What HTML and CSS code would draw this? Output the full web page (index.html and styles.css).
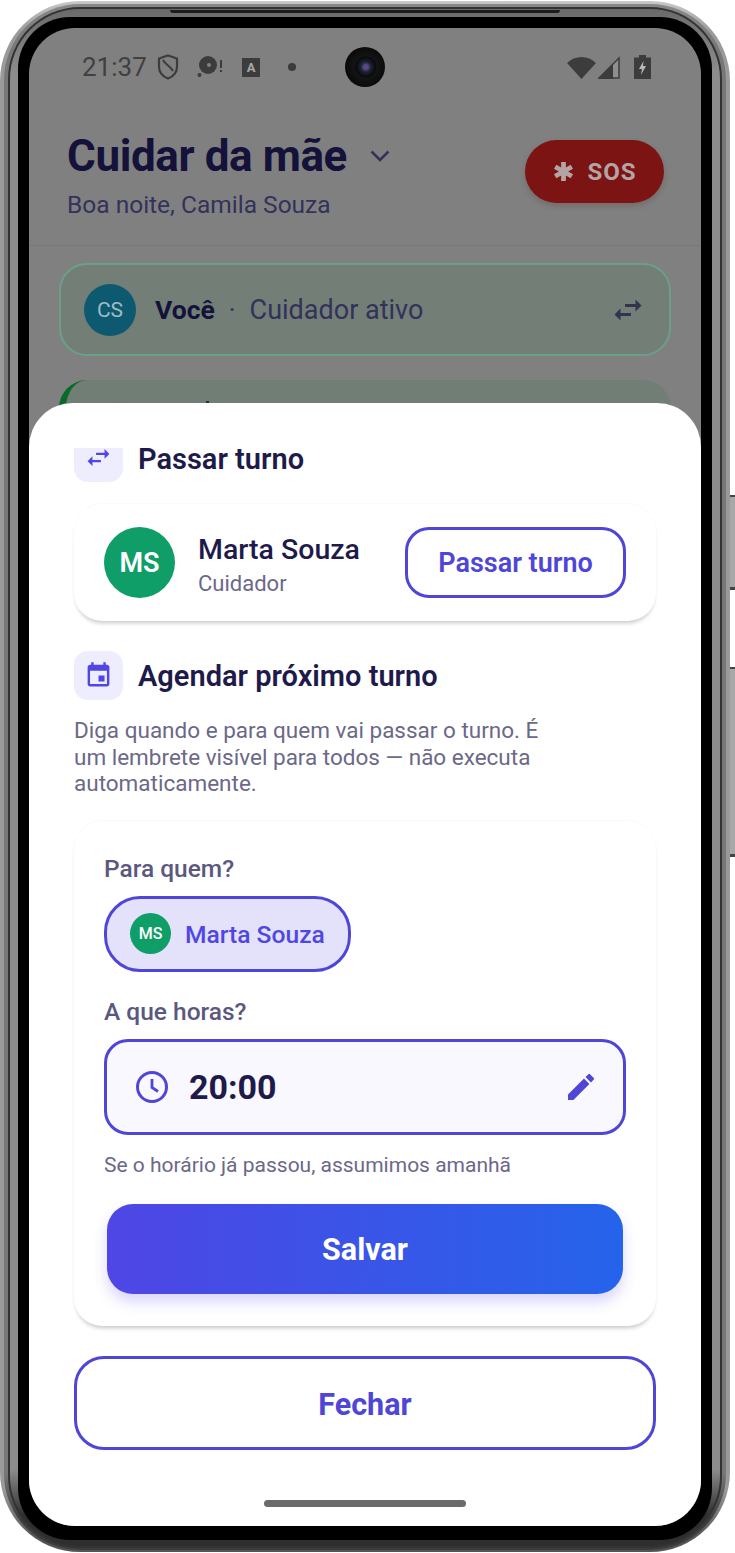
FILE: index.html
```html
<!DOCTYPE html>
<html lang="pt-BR">
<head>
<meta charset="utf-8">
<title>Cuidar da mãe</title>
<link rel="stylesheet" href="styles.css">
</head>
<body>
<div class="device">
  <div class="rim-a"><div class="rim-b"><div class="rim-c"><div class="rim-d"><div class="bezel">
    <main class="screen">
      <div class="app">
        <div class="status">
          <span class="clock">21:37</span>
          <svg class="st-shield" viewBox="0 0 22 26"><path d="M11 1.5 20 4.5V13c0 5.5-4 9.5-9 11.5C6 22.500 2 18.500 2 13V4.500Z" fill="none" stroke="currentColor" stroke-width="2.200"/><path d="M6 6c2 4 8 7 10 11" fill="none" stroke="currentColor" stroke-width="2"/></svg>
          <svg class="st-disk" viewBox="0 0 26 22"><circle cx="11" cy="9" r="9" fill="currentColor"/><circle cx="12" cy="9" r="2" fill="#808080"/><circle cx="2.500" cy="19" r="2" fill="currentColor"/><rect x="23" y="4" width="2" height="8" fill="currentColor"/><rect x="23" y="14" width="2" height="2" fill="currentColor"/></svg>
          <span class="st-a">A</span>
          <span class="st-dot"></span>
          <span class="status-gap"></span>
          <svg class="st-wifi" viewBox="0 0 29 24"><path d="M0 8C8 0 21 0 29 8L14.500 24Z" fill="currentColor"/></svg>
          <svg class="st-signal" viewBox="0 0 22 23"><path d="M21 2V22H1Z" fill="#8e8e8e" stroke="currentColor" stroke-width="1.500"/><path d="M15 8V23H0Z" fill="currentColor"/></svg>
          <svg class="st-batt" viewBox="0 0 17 24"><path d="M5 0h7v2.500h5V24H0V2.500h5Z" fill="currentColor"/><path d="M9.500 6 5 14h3l-1 6 5-9H9Z" fill="#b8b8b8"/></svg>
        </div>
        <header class="header">
          <div class="header-main">
            <div class="title-row">
              <h1 class="app-title">Cuidar da mãe</h1>
              <svg class="chevron" viewBox="0 0 24 24"><path d="M3.500 7.500 12 16l8.500-8.500" fill="none" stroke="currentColor" stroke-width="2.600"/></svg>
            </div>
            <p class="greeting">Boa noite, Camila Souza</p>
          </div>
          <button class="sos">
            <svg class="sos-icon" viewBox="0 0 24 24"><path d="M12 2v20M3.300 7l17.400 10M20.700 7 3.300 17" fill="none" stroke="currentColor" stroke-width="5"/></svg>
            <span>SOS</span>
          </button>
        </header>
        <section class="active-card">
          <span class="avatar-cs">CS</span>
          <span class="you">Você</span>
          <span class="sep">·</span>
          <span class="role">Cuidador ativo</span>
          <svg class="swap-dim" viewBox="0 0 24 24"><path d="M6.990 11 3 15l3.990 4v-3H14v-2H6.990v-3zM21 9l-3.990-4v3H10v2h7.010v3L21 9z" fill="currentColor"/></svg>
        </section>
        <section class="peek-card">
          <span class="peek-avatar"></span>
          <span class="peek-mark"></span>
        </section>
      </div>

      <div class="sheet">
        <div class="sheet-body">
          <div class="sec-head sec-head-first">
            <span class="tile tile-clipped"><svg class="tile-icon" viewBox="0 0 24 24"><path d="M6.990 11 3 15l3.990 4v-3H14v-2H6.990v-3zM21 9l-3.990-4v3H10v2h7.010v3L21 9z" fill="currentColor"/></svg></span>
            <h2 class="sec-title">Passar turno</h2>
          </div>
          <div class="card person-card">
            <span class="avatar-ms">MS</span>
            <div class="person">
              <span class="person-name">Marta Souza</span>
              <span class="person-role">Cuidador</span>
            </div>
            <button class="pass-btn">Passar turno</button>
          </div>
          <div class="sec-head sec-gap">
            <span class="tile"><svg class="tile-icon" viewBox="0 0 24 24"><path d="M17 12h-5v5h5v-5zM16 1v2H8V1H6v2H5c-1.110 0-1.990.9-1.990 2L3 19c0 1.100.89 2 2 2h14c1.100 0 2-.9 2-2V5c0-1.100-.9-2-2-2h-1V1h-2zm3 18H5V8h14v11z" fill="currentColor"/></svg></span>
            <h2 class="sec-title">Agendar próximo turno</h2>
          </div>
          <p class="desc">Diga quando e para quem vai passar o turno. É um lembrete visível para todos — não executa automaticamente.</p>
          <div class="card form-card">
            <label class="field-label">Para quem?</label>
            <button class="chip">
              <span class="chip-avatar">MS</span>
              <span class="chip-name">Marta Souza</span>
            </button>
            <label class="field-label label-gap">A que horas?</label>
            <div class="time-input">
              <svg class="clock-icon" viewBox="0 0 32 32"><circle cx="16" cy="16" r="14.500" fill="none" stroke="currentColor" stroke-width="3"/><path d="M16 8v8.500l6 4" fill="none" stroke="currentColor" stroke-width="2.800"/></svg>
              <span class="time-value">20:00</span>
              <svg class="edit-icon" viewBox="3 3 18 18"><path d="M3 17.250V21h3.750L17.810 9.940l-3.750-3.750L3 17.250zM20.710 7.040c.39-.39.39-1.020 0-1.410l-2.340-2.340c-.39-.39-1.020-.39-1.410 0l-1.830 1.830 3.750 3.750 1.830-1.830z" fill="currentColor"/></svg>
            </div>
            <p class="hint">Se o horário já passou, assumimos amanhã</p>
            <button class="save-btn">Salvar</button>
          </div>
          <button class="close-btn">Fechar</button>
        </div>
        <div class="home-bar"></div>
      </div>
    </main>
  </div></div></div></div></div>
  <span class="camera"></span>
</div>
</body>
</html>
```

FILE: styles.css
```css
* { box-sizing: border-box; }
html, body { margin: 0; padding: 0; background: #fff; }
body { font-family: Roboto, "Noto Sans", sans-serif; overflow: hidden; height: 1553px; }
h1, h2, p { margin: 0; }
button { font-family: inherit; cursor: pointer; }

/* device frame */
.device { position: relative; width: 730px; height: 1551px; margin-top: 1px; }
.device::before, .device::after {
  content: ""; position: absolute; left: 730px; width: 5px;
  background: #a8a8a8; border-top: 2px solid #444; border-bottom: 3px solid #444;
}
.device::before { top: 494px; height: 90px; }
.device::after { top: 666px; height: 185px; }
.rim-a { height: 100%; padding: 3px 4px 2px; border-radius: 80px; background: linear-gradient(#c8c8c8, #9a9a9a 2%, #9a9a9a 96%, #555 99%); }
.rim-b { height: 100%; padding: 3px 4px 2px; border-radius: 76px; background: linear-gradient(#888, #777 3%, #777 95%, #3c3c3c 98%); }
.rim-c { height: 100%; padding: 2px; border-radius: 72px; background: #333; }
.rim-d { position: relative; height: 100%; padding: 8px 8px 6px; border-radius: 70px; background: linear-gradient(#6a6a6a, #8c8c8c 4%, #8c8c8c 95%, #2e2e2e 98%); }
.rim-d::before { content: ""; position: absolute; left: 160px; top: 1px; width: 390px; height: 3px; border-radius: 0 0 4px 4px; background: #1c1c1c; }
.bezel { height: 100%; padding: 11px 11px 14px; border-radius: 52px; background: #000; }
.screen { position: relative; height: 1498px; border-radius: 46px; overflow: hidden; background: #808080; }
.camera {
  position: absolute; left: 345px; top: 46px; width: 40px; height: 40px; border-radius: 50%;
  background: radial-gradient(circle at 52% 50%, #5b4a8a 0 2px, #1c2430 5px, #08090c 10px, #141414 11px, #0a0a0a 20px);
}

/* dimmed app */
.app { height: 100%; display: flex; flex-direction: column; color: #14123a; }
.status { height: 78px; display: flex; align-items: center; padding: 0 50px 0 53px; color: #3c3c3c; flex: none; }
.clock { font-size: 26px; color: #404040; width: 66px; }
.st-shield { width: 22px; height: 26px; margin-left: 9px; }
.st-disk { width: 26px; height: 22px; margin-left: 18px; }
.st-a { width: 18px; height: 19px; margin-left: 19px; background: #3c3c3c; color: #a8a8a8; font-size: 13px; font-weight: 700; line-height: 19px; text-align: center; }
.st-dot { width: 8px; height: 8px; border-radius: 50%; background: #3c3c3c; margin-left: 28px; }
.status-gap { flex: 1; }
.st-wifi { width: 29px; height: 24px; }
.st-signal { width: 22px; height: 23px; margin-left: 2px; }
.st-batt { width: 17px; height: 24px; margin-left: 14px; }

.header { height: 140px; flex: none; display: flex; justify-content: space-between; align-items: flex-start; padding: 24px 37px 0 38px; border-bottom: 1px solid #787878; }
.title-row { display: flex; align-items: center; }
.app-title { font-size: 44px; line-height: 52px; font-weight: 700; letter-spacing: -0.4px; color: #14123a; }
.chevron { width: 24px; height: 24px; margin-left: 21px; color: #33335a; }
.greeting { font-size: 24.500px; line-height: 30px; margin-top: 8px; color: #33325a; }
.sos { margin-top: 10px; width: 139px; height: 63px; border: 0; border-radius: 32px; background: #7c1414; color: #b4a4a4; display: flex; align-items: center; justify-content: center; gap: 12px; font-size: 24px; font-weight: 700; letter-spacing: 1px; box-shadow: 0 3px 6px rgba(60,0,0,.18); }
.sos-icon { width: 23px; height: 23px; }

.active-card { margin: 17px 30px 0; height: 93px; flex: none; display: flex; align-items: center; padding: 0 23px; border: 2px solid #6aa08a; border-radius: 28px; background: #727e76; }
.avatar-cs { width: 52px; height: 52px; border-radius: 50%; background: #0d5a70; color: #9fbcc5; display: flex; align-items: center; justify-content: center; font-size: 21px; }
.you { margin-left: 19px; font-size: 26.500px; font-weight: 700; color: #14123a; }
.sep { margin: 0 14px; font-size: 26px; color: #33325a; }
.role { flex: 1; font-size: 27px; color: #33325a; }
.swap-dim { width: 36px; height: 36px; color: #33334f; }
.peek-card { position: relative; margin: 24px 30px 0; height: 120px; flex: none; border-radius: 28px; background: #717e76; border-left: 7px solid #0a6a2a; }
.peek-avatar { position: absolute; left: 28px; top: 22px; width: 50px; height: 50px; border-radius: 50%; background: #6c7870; }
.peek-mark { position: absolute; left: 140px; top: 21px; width: 3px; height: 4px; background: #1e3a30; }

/* bottom sheet */
.sheet { position: absolute; left: 0; right: 0; top: 375px; bottom: 0; display: flex; flex-direction: column; background: #fff; border-radius: 44px 44px 0 0; }
.sheet-body { padding: 45px 45px 0; }
.sec-head { display: flex; align-items: center; gap: 15px; }
.sec-head-first { align-items: flex-start; }
.sec-head-first .sec-title { line-height: 22px; padding-top: 0; }
.sec-gap { margin-top: 30px; }
.tile { width: 49px; height: 49px; flex: none; display: flex; align-items: center; justify-content: center; border-radius: 14px; background: #eeedfd; color: #4f46e5; }
.tile-clipped { height: 34px; align-items: flex-start; border-radius: 0 0 14px 14px; }
.tile-clipped .tile-icon { margin-top: -5px; }
.tile-icon { width: 29px; height: 29px; }
.sec-title { font-size: 29px; line-height: 34px; padding-top: 1px; font-weight: 600; color: #1e1b4b; }
.card { background: #fff; border-radius: 28px; box-shadow: 0 4px 4px -2px rgba(0,0,0,.22), 0 -1px 1px rgba(0,0,0,.025); }
.person-card { margin-top: 22px; height: 117px; display: flex; align-items: center; padding: 0 30px; }
.avatar-ms { width: 71px; height: 71px; flex: none; border-radius: 50%; background: #0f9d68; color: #fff; display: flex; align-items: center; justify-content: center; font-size: 27px; font-weight: 600; }
.person { flex: 1; margin-left: 23px; padding-top: 5px; display: flex; flex-direction: column; }
.person-name { font-size: 28.500px; line-height: 36px; font-weight: 500; color: #1e1b4b; }
.person-role { font-size: 22px; line-height: 30px; margin-top: 1px; color: #6b6888; }
.pass-btn { width: 221px; height: 71px; padding-top: 2px; background: #fff; border: 3px solid #4f46d8; border-radius: 24px; color: #4f46d8; font-size: 27px; font-weight: 600; }
.desc { margin-top: 17px; max-width: 480px; font-size: 22.500px; line-height: 26.500px; color: #6b6888; }
.form-card { margin-top: 24px; padding: 34px 30px 32px; height: 505px; }
.field-label { display: block; font-size: 24.500px; line-height: 28px; font-weight: 500; color: #5b5880; }
.label-gap { margin-top: 26px; }
.chip { margin-top: 13px; width: 247px; height: 76px; display: flex; align-items: center; padding: 0 0 0 23px; gap: 14px; background: #e4e2fa; border: 3px solid #4f46d8; border-radius: 36px; color: #4f46e5; font-size: 24.600px; font-weight: 500; }
.chip-name { padding-top: 2px; }
.chip-avatar { width: 41px; height: 41px; border-radius: 50%; background: #0f9d68; color: #fff; display: flex; align-items: center; justify-content: center; font-size: 16px; font-weight: 500; }
.time-input { margin-top: 13px; height: 96px; display: flex; align-items: center; padding: 0 29px; background: #f8f8fe; border: 3px solid #4f46d8; border-radius: 24px; color: #4f46d8; }
.clock-icon { width: 32px; height: 32px; }
.time-value { flex: 1; margin-left: 21px; padding-top: 1px; font-size: 34px; font-weight: 700; color: #1e1b4b; }
.edit-icon { width: 26px; height: 26px; }
.hint { margin-top: 16px; font-size: 21px; line-height: 28px; color: #6b6888; }
.save-btn { display: block; margin: 25px 3px 0; width: 516px; height: 90px; padding-top: 3px; border: 0; border-radius: 26px; background: linear-gradient(90deg, #4f46e5, #2563eb); color: #fff; font-size: 30.500px; font-weight: 700; box-shadow: 0 8px 14px rgba(79,70,229,.22); }
.close-btn { display: block; margin-top: 30px; width: 582px; height: 94px; padding-top: 5px; background: #fff; border: 3px solid #4f46d8; border-radius: 30px; color: #4f46d8; font-size: 30.500px; font-weight: 700; }
.home-bar { margin: 50px auto 0; width: 202px; height: 7px; border-radius: 4px; background: #6b6b6b; }
```
